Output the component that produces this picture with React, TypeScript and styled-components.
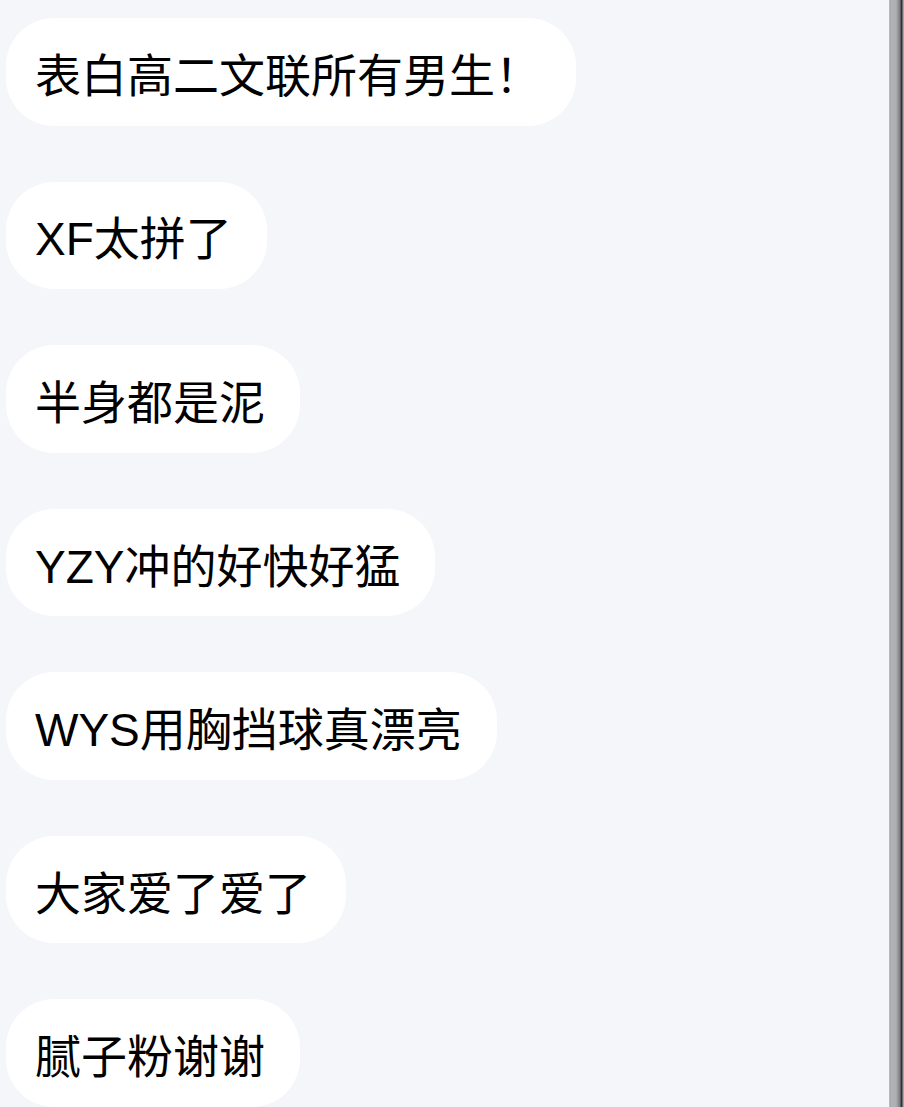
import React from "react";
import styled, { createGlobalStyle } from "styled-components";

const Global = createGlobalStyle`
  html, body { margin: 0; padding: 0; }
  body {
    background: #f5f6fa;
    width: 904px;
    height: 1107px;
    overflow: hidden;
  }
`;

const Screen = styled.div`
  display: flex;
  width: 904px;
  height: 1107px;
  background: #f5f6fa;
  overflow: hidden;
`;

const Feed = styled.div`
  flex: 1;
  display: flex;
  flex-direction: column;
  align-items: flex-start;
  gap: 56px;
  padding: 18px 0 0 6px;
`;

const Bubble = styled.div`
  position: relative;
  box-sizing: border-box;
  height: 108px;
  display: flex;
  align-items: center;
  padding: 8px 35px 0 29px;
  background: #ffffff;
  border-radius: 48px;
  font-family: "Liberation Sans", "Noto Sans CJK SC", sans-serif;
  font-size: 46px;
  line-height: 1;
  color: #000000;
  white-space: nowrap;
`;

const Edge = styled.div`
  width: 15px;
  height: 100%;
  flex: none;
  background: linear-gradient(
    to right,
    #d6d7db 0px,
    #9d9ea2 1px,
    #b2b3b7 2px,
    #aeafb3 7px,
    #949599 9px,
    #7d7e82 11px,
    #3a3a3d 12px,
    #2b2b2e 13px,
    #a4a5a9 14px
  );
`;

const messages = [
  "表白高二文联所有男生！",
  "XF太拼了",
  "半身都是泥",
  "YZY冲的好快好猛",
  "WYS用胸挡球真漂亮",
  "大家爱了爱了",
  "腻子粉谢谢",
];

export default function App() {
  return (
    <>
      <Global />
      <Screen>
        <Feed>
          {messages.map((m) => (
            <Bubble key={m}>{m}</Bubble>
          ))}
        </Feed>
        <Edge />
      </Screen>
    </>
  );
}
